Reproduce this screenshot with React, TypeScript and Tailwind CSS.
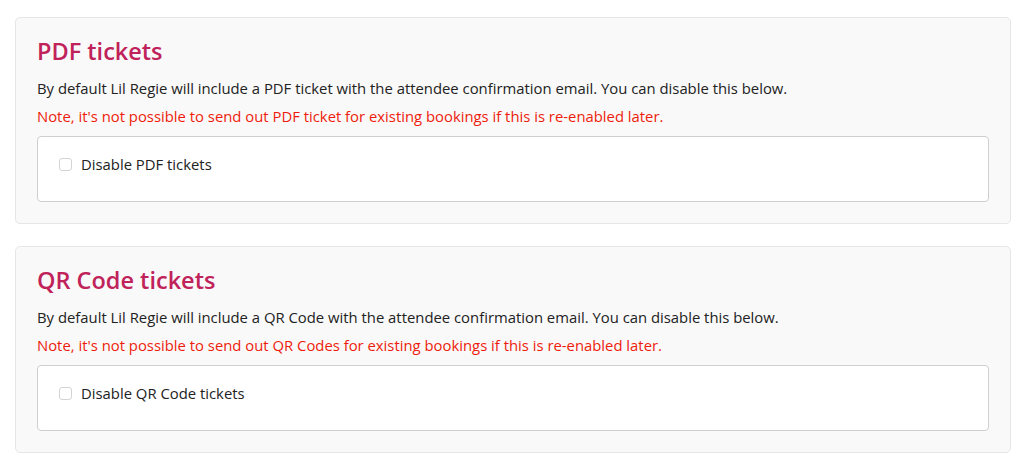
import React from "react";

function Card({ title, body, note, label }: { title: string; body: string; note: string; label: string }) {
  return (
    <div className="bg-[#f9f9f9] border border-[#e6e6e6] rounded-[5px] px-[21px] pt-[18px] pb-[21px]">
      <h2 className="text-[23.5px] leading-[30px] font-semibold text-[#c0225a]">{title}</h2>
      <p className="mt-[11px] text-[14.85px] leading-[22px] text-[#222]">{body}</p>
      <p className="mt-[6px] text-[14.85px] leading-[22px] text-[#ee1c0c]">{note}</p>
      <div className="mt-[9px] h-[66px] bg-white border border-[#cfcfcf] rounded-[4px] flex items-start pt-[16px] pl-[21px]">
        <span className="mt-[5px] w-[13px] h-[13px] border border-[#d4d4d4] rounded-[3px] bg-white shrink-0"></span>
        <span className="ml-[9px] text-[14.85px] leading-[22px] text-[#222]">{label}</span>
      </div>
    </div>
  );
}

export default function App() {
  return (
    <div className="pt-[17px] pl-[15px] pr-[13px] bg-white min-h-[463px] flex flex-col gap-[22px]" style={{ fontFamily: '"Open Sans", sans-serif' }}>
      <Card
        title="PDF tickets"
        body="By default Lil Regie will include a PDF ticket with the attendee confirmation email. You can disable this below."
        note="Note, it's not possible to send out PDF ticket for existing bookings if this is re-enabled later."
        label="Disable PDF tickets"
      />
      <Card
        title="QR Code tickets"
        body="By default Lil Regie will include a QR Code with the attendee confirmation email. You can disable this below."
        note="Note, it's not possible to send out QR Codes for existing bookings if this is re-enabled later."
        label="Disable QR Code tickets"
      />
    </div>
  );
}
